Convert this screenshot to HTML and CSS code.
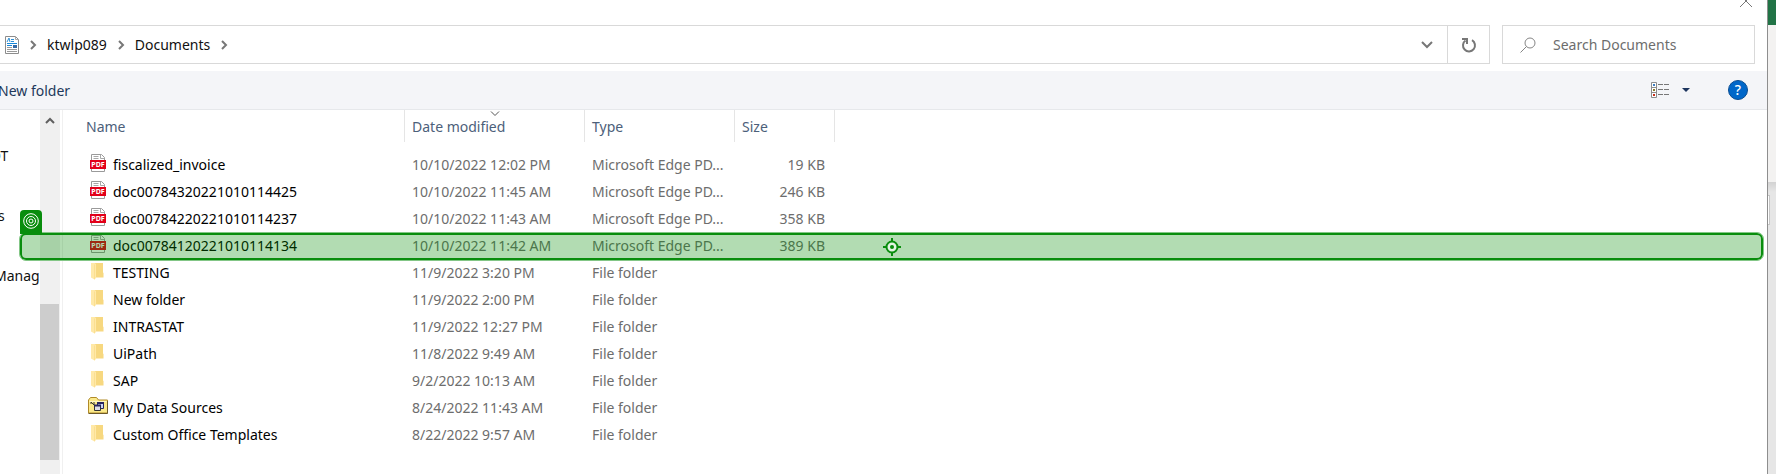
FILE: index.html
```html
<!DOCTYPE html>
<html lang="en">
<head>
<meta charset="utf-8">
<title>Documents</title>
<link rel="stylesheet" href="styles.css">
</head>
<body>
<svg class="defs" width="0" height="0" aria-hidden="true">
  <symbol id="pdf" viewBox="0 0 20 20">
    <path d="M3.500 1.500h10l3 3v14h-13z" fill="#fff" stroke="#9a9a9a"/>
    <path d="M12.500 1.500v4h4M5.500 3.500h5M5.500 5.500h5" fill="none" stroke="#a8a8a8"/>
    <path d="M2 7h16v9H2z" fill="#e2001a"/>
    <text x="10" y="14" text-anchor="middle" class="pdf-text">PDF</text>
  </symbol>
  <symbol id="folder" viewBox="0 0 20 20">
    <path d="M6 2h9v9.500l.5.500v4.500H6z" fill="#f7d880"/>
    <path d="M3 2h3.500l1.500 1v14l-1.500 1.500L3 16.500z" fill="#ffe9a8"/>
    <path d="M6 4l1-1v15l-1 .500z" fill="#fbdf92"/>
  </symbol>
  <symbol id="source" viewBox="0 0 20 20">
    <path d="M.5 17V4l2-2.500h6l2 2.500h9v13z" fill="#fbe98a" stroke="#b08a28"/>
    <path d="M1.500 5.500h17" stroke="#fff8c8"/>
    <path d="M.5 17.500h19V5" fill="none" stroke="#6f5a28"/>
    <path d="M9.500 6.500h6v6h-6z" fill="#c9d4f4" stroke="#26245f"/>
    <path d="M6.500 9.500h6v5h-6z" fill="#dcdce8" stroke="#333"/>
    <path d="M9 7h7M6 9.500h7" stroke="#26245f" stroke-width="2"/>
    <path d="M3 6l3 3M3 6v2M6 6v3" stroke="#333"/>
  </symbol>
</svg>
<div class="screen">
  <main class="dialog">
    <header class="titlebar">
      <button class="plain close" aria-label="Close"><svg width="14" height="14" viewBox="0 0 14 14"><path d="M1 1l12 12M13 1L1 13" stroke="#777" fill="none"/></svg></button>
    </header>
    <div class="navigation">
      <nav class="address" aria-label="Address">
        <svg class="doc-icon" width="16" height="20" viewBox="0 0 16 20"><path d="M1.500 1.500h10l3 3v14h-13z" fill="#fff" stroke="#8c8c8c"/><path d="M11.500 1.500v3h3" fill="none" stroke="#aaa"/><path d="M3 7l2-4 1 4M7 4.500h3M7 6.500h3" fill="none" stroke="#2c8fd6"/><path d="M3 8.500h10M3 10.500h5" stroke="#1687d9"/><path d="M9 10h4v3H9z" fill="#3569a4"/><path d="M3 12.500h5M3 14.500h10M3 16.500h10" stroke="#999"/></svg>
        <svg class="sep" width="8" height="10" viewBox="0 0 8 10"><path d="M2 1l4 4-4 4"/></svg>
        <a href="#">ktwlp089</a>
        <svg class="sep" width="8" height="10" viewBox="0 0 8 10"><path d="M2 1l4 4-4 4"/></svg>
        <a href="#">Documents</a>
        <svg class="sep" width="8" height="10" viewBox="0 0 8 10"><path d="M2 1l4 4-4 4"/></svg>
        <button class="plain history" aria-label="Previous locations"><svg width="12" height="8" viewBox="0 0 12 8"><path d="M1 1l5 5 5-5" fill="none" stroke="#777" stroke-width="2"/></svg></button>
        <button class="plain refresh" aria-label="Refresh"><svg width="16" height="16" viewBox="0 0 16 16"><path d="M11 3.200A6 6 0 1 1 4.500 3.500" fill="none" stroke="#777" stroke-width="2"/><path d="M1 2h5v5" fill="none" stroke="#777" stroke-width="2"/></svg></button>
      </nav>
      <label class="search"><svg width="16" height="16" viewBox="0 0 16 16"><circle cx="10" cy="6" r="5" fill="none" stroke="#858585"/><path d="M6.500 9.500L.5 15.500" stroke="#858585"/></svg><input type="text" placeholder="Search Documents" aria-label="Search Documents"></label>
    </div>
    <div class="toolbar">
      <button class="plain new-folder">New folder</button>
      <div class="tools">
        <button class="plain" aria-label="View"><svg width="19" height="16" viewBox="0 0 19 16"><path d="M.5.5h5v15h-5zM.5 5.500h5M.5 10.500h5" fill="#fff" stroke="#8d8d8d"/><path d="M7 2.500h5M13 2.500h5M7 7.500h5M13 7.500h5M7 12.500h5M13 12.500h5" stroke="#777"/><path d="M2 2h2v2H2z" fill="#3d7ec2"/><path d="M2 7h2v2H2z" fill="#897b2d"/><path d="M2 12h2v2H2z" fill="#c6301c"/></svg></button>
        <button class="plain more" aria-label="More view options"><svg width="8" height="4" viewBox="0 0 8 4"><path d="M0 0h8L4 4z" fill="#1c355e"/></svg></button>
        <button class="help" aria-label="Help">?</button>
      </div>
    </div>
    <div class="content">
      <nav class="tree" aria-label="Folders"><a class="cut-l" href="#">OT</a><a class="cut-m" href="#">s</a><a class="cut-s" href="#">Manag</a></nav>
      <div class="scroll"><svg width="10" height="7" viewBox="0 0 10 7"><path d="M1 6l4-4 4 4" fill="none" stroke="#606060" stroke-width="2"/></svg><div class="thumb"></div></div>
      <div class="files">
        <table>
          <colgroup><col class="c-name"><col class="c-date"><col class="c-type"><col class="c-size"></colgroup>
          <thead><tr><th>Name</th><th>Date modified<svg class="sort" width="10" height="6" viewBox="0 0 10 6"><path d="M1 .5l4 4 4-4" fill="none" stroke="#555"/></svg></th><th>Type</th><th>Size</th></tr></thead>
          <tbody>
            <tr><td><svg class="icon"><use href="#pdf"/></svg>fiscalized_invoice</td><td>10/10/2022 12:02 PM</td><td>Microsoft Edge PD...</td><td>19 KB</td></tr>
            <tr><td><svg class="icon"><use href="#pdf"/></svg>doc00784320221010114425</td><td>10/10/2022 11:45 AM</td><td>Microsoft Edge PD...</td><td>246 KB</td></tr>
            <tr><td><svg class="icon"><use href="#pdf"/></svg>doc00784220221010114237</td><td>10/10/2022 11:43 AM</td><td>Microsoft Edge PD...</td><td>358 KB</td></tr>
            <tr><td><svg class="icon"><use href="#pdf"/></svg>doc00784120221010114134</td><td>10/10/2022 11:42 AM</td><td>Microsoft Edge PD...</td><td>389 KB</td></tr>
            <tr><td><svg class="icon"><use href="#folder"/></svg>TESTING</td><td>11/9/2022 3:20 PM</td><td>File folder</td><td></td></tr>
            <tr><td><svg class="icon"><use href="#folder"/></svg>New folder</td><td>11/9/2022 2:00 PM</td><td>File folder</td><td></td></tr>
            <tr><td><svg class="icon"><use href="#folder"/></svg>INTRASTAT</td><td>11/9/2022 12:27 PM</td><td>File folder</td><td></td></tr>
            <tr><td><svg class="icon"><use href="#folder"/></svg>UiPath</td><td>11/8/2022 9:49 AM</td><td>File folder</td><td></td></tr>
            <tr><td><svg class="icon"><use href="#folder"/></svg>SAP</td><td>9/2/2022 10:13 AM</td><td>File folder</td><td></td></tr>
            <tr><td><svg class="icon"><use href="#source"/></svg>My Data Sources</td><td>8/24/2022 11:43 AM</td><td>File folder</td><td></td></tr>
            <tr><td><svg class="icon"><use href="#folder"/></svg>Custom Office Templates</td><td>8/22/2022 9:57 AM</td><td>File folder</td><td></td></tr>
          </tbody>
        </table>
      </div>
      <div class="target">
        <div class="tag"><svg width="16" height="16" viewBox="0 0 16 16" fill="none" stroke="#fff"><circle cx="8" cy="8" r="7.300"/><circle cx="8" cy="8" r="4.500"/><circle cx="8" cy="8" r="2"/></svg></div>
        <svg width="18" height="18" viewBox="0 0 18 18"><circle cx="9" cy="9" r="5.500" fill="#e4f4e4" stroke="#098d0d" stroke-width="2"/><circle cx="9" cy="9" r="2" fill="#098d0d"/><path d="M9 0v4M9 14v4M0 9h4M14 9h4" stroke="#098d0d" stroke-width="2"/></svg>
      </div>
    </div>
  </main>
  <aside class="behind"><div class="green"></div><div class="ribbon"></div><div class="sheet"><div class="field"></div></div></aside>
</div>
</body>
</html>
```
FILE: styles.css
```css
* { box-sizing: border-box; }
body { margin: 0; background: #fff; color: #111; font: 14px/20px "Noto Sans", "Open Sans", sans-serif; }
a { color: inherit; text-decoration: none; }
svg { display: block; flex: none; }
.defs { position: absolute; }
.plain { display: flex; align-items: center; justify-content: center; margin: 0; padding: 0; border: 0; background: none; color: inherit; font: inherit; }
.screen { display: flex; min-height: 100vh; overflow: hidden; }
.dialog { flex: 1; min-width: 0; display: flex; flex-direction: column; border-right: 1px solid #8e8e8e; }
.titlebar { display: flex; justify-content: flex-end; align-items: flex-start; height: 25px; padding-right: 14px; overflow: hidden; }
.close { margin-top: -6px; }
.navigation { display: flex; gap: 12px; padding: 0 12px 7px 0; }
.address { flex: 1; display: flex; align-items: center; height: 39px; border: 1px solid #d9d9d9; border-left: 0; padding-left: 4px; }
.address a { margin: 0 10px; }
.sep { fill: none; stroke: #777; stroke-width: 2; }
.doc-icon { margin-right: 9px; }
.history { width: 40px; height: 37px; margin-left: auto; }
.refresh { width: 42px; height: 37px; border-left: 1px solid #d9d9d9; }
.search { display: flex; align-items: center; gap: 17px; width: 253px; height: 39px; padding-left: 17px; border: 1px solid #d9d9d9; }
.search input { flex: 1; min-width: 0; padding: 0; border: 0; outline: 0; background: none; font: inherit; }
.search input::placeholder { color: #6d6d6d; opacity: 1; }
.toolbar { display: flex; align-items: center; justify-content: space-between; height: 39px; padding-right: 19px; background: #f4f5f8; border-bottom: 1px solid #e6e8eb; color: #1e395b; }
.new-folder { margin-left: -2px; padding-top: 2px; }
.tools { display: flex; align-items: center; }
.more { margin: 0 38px 0 12px; }
.help { width: 20px; height: 20px; padding: 0; border: 1px solid #0a4d92; border-radius: 50%; background: #0067c9; color: #fff; font: 500 14px/18px "Noto Sans", sans-serif; }
.content { flex: 1; position: relative; display: flex; }
.tree { display: flex; flex-direction: column; gap: 40px; width: 40px; padding-top: 36px; overflow: hidden; white-space: nowrap; }
.cut-l { margin-left: -10px; }
.cut-m { margin-left: -2px; }
.cut-s { margin-left: -6px; }
.scroll { display: flex; flex-direction: column; align-items: center; width: 20px; padding: 7px 1px 14px 0; background: #f0f0f0; }
.thumb { width: 100%; height: 156px; margin-top: auto; background: #cdcdcd; }
.files { flex: 1; margin-left: 2px; border-left: 1px solid #f0f0f0; }
table { width: 772px; table-layout: fixed; border-collapse: separate; border-spacing: 0; white-space: nowrap; }
.c-name { width: 342px; }
.c-date { width: 180px; }
.c-type { width: 150px; }
.c-size { width: 100px; }
th { position: relative; height: 32px; padding: 2px 0 0 7px; border-right: 1px solid #e5e5e5; color: #4c607a; font-weight: 400; text-align: left; }
th:first-child { padding-left: 23px; }
.sort { position: absolute; top: 1px; left: calc(50% - 5px); }
tbody::before { content: ""; display: block; height: 9px; }
td { height: 27px; padding: 0 0 0 7px; color: #6d6d6d; }
td:first-child { display: flex; align-items: center; gap: 5px; padding-left: 25px; color: #000; }
td:last-child { padding-right: 10px; text-align: right; }
.icon { width: 20px; height: 20px; margin-bottom: 4px; }
.pdf-text { fill: #fff; font: 700 7px "Noto Sans", sans-serif; }
.target { position: absolute; top: 122px; left: 19px; right: 3px; height: 29px; display: flex; align-items: center; justify-content: center; border: 1px solid #83c686; border-radius: 7px; background: rgba(0, 140, 0, .3); box-shadow: inset 0 0 0 2px #098d0d; }
.tag { position: absolute; left: 0; bottom: 26px; display: flex; align-items: center; justify-content: center; width: 22px; height: 24px; padding-bottom: 2px; border-radius: 4px 4px 0 0; background: #098d0d; }
.behind { display: flex; flex-direction: column; width: 8px; background: #e6e6e6; }
.green { height: 25px; background: #217346; }
.ribbon { height: 157px; background: #f3f2f1; }
.sheet { flex: 1; padding-top: 13px; background: linear-gradient(#d2d2d2, #e6e6e6 10px); }
.field { width: 2px; height: 30px; border: 1px solid #c6c6c6; border-left: 0; background: #fff; }
```
